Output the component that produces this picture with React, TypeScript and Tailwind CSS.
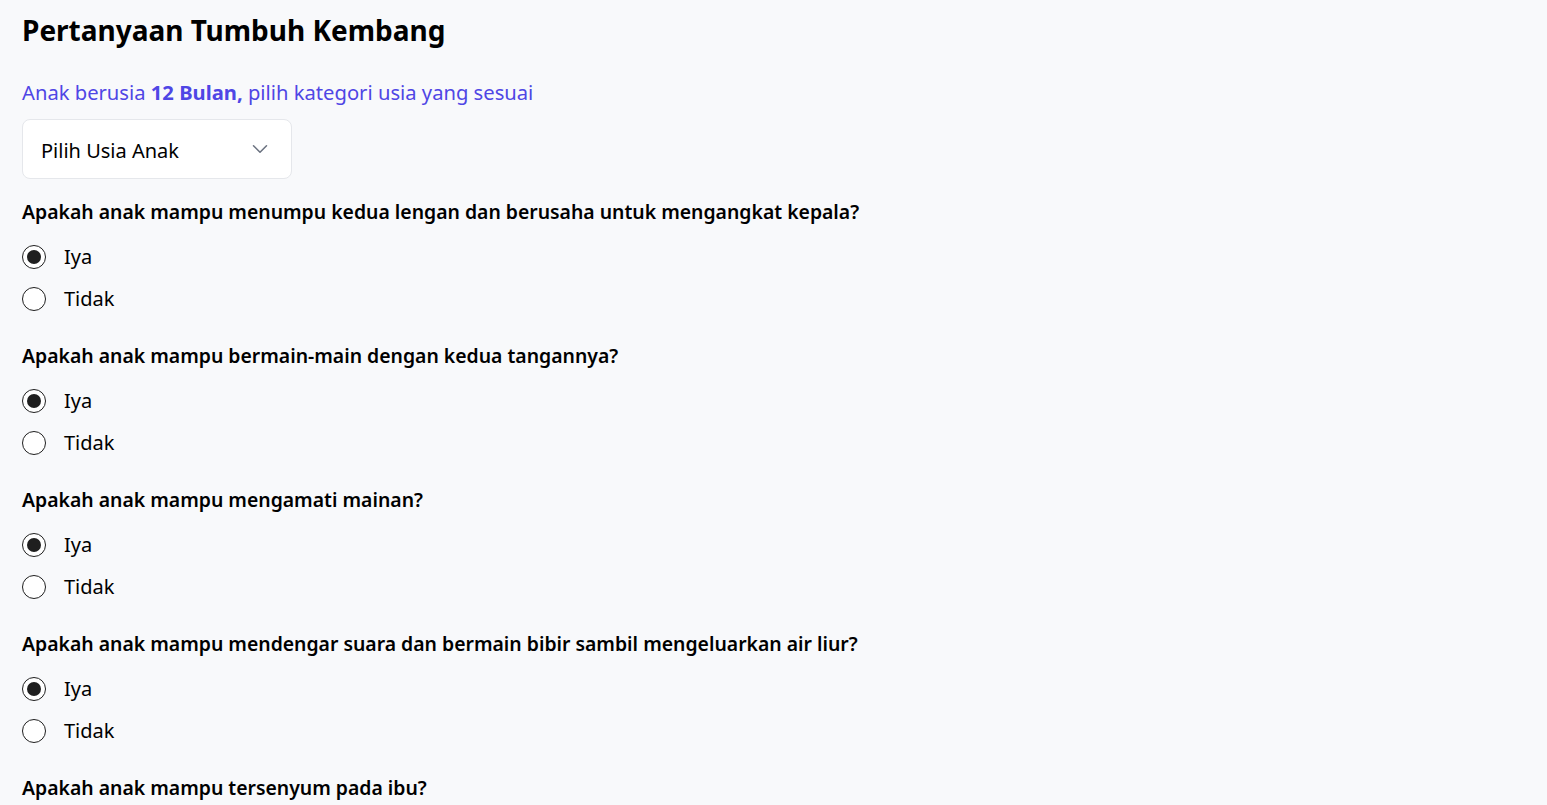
import React, { useState } from "react";

const questions = [
  "Apakah anak mampu menumpu kedua lengan dan berusaha untuk mengangkat kepala?",
  "Apakah anak mampu bermain-main dengan kedua tangannya?",
  "Apakah anak mampu mengamati mainan?",
  "Apakah anak mampu mendengar suara dan bermain bibir sambil mengeluarkan air liur?",
  "Apakah anak mampu tersenyum pada ibu?",
];

function Radio({ checked, label, onClick }: { checked: boolean; label: string; onClick: () => void }) {
  return (
    <button type="button" onClick={onClick} className="flex items-center gap-[18px] h-[42px] text-left">
      <span className="w-6 h-6 rounded-full border-[1.5px] border-[#1f1f1f] bg-white flex items-center justify-center">
        {checked && <span className="w-[14px] h-[14px] rounded-full bg-[#1f1f1f]" />}
      </span>
      <span className="text-[20px] text-black">{label}</span>
    </button>
  );
}

export default function App() {
  const [answers, setAnswers] = useState<string[]>(questions.map(() => "Iya"));
  return (
    <div
      className="min-h-screen bg-[#f8f9fb] px-[22px] pt-[10px] pb-10 text-black"
      style={{ fontFamily: '"Noto Sans", "Open Sans", sans-serif' }}
    >
      <h1 className="text-[28px] font-bold leading-[40px]">Pertanyaan Tumbuh Kembang</h1>
      <p className="mt-[28px] text-[20.2px] text-[#4f46e5] leading-[28px]">
        Anak berusia <span className="font-bold">12 Bulan,</span> pilih kategori usia yang sesuai
      </p>
      <div className="mt-[13px] w-[270px] h-[60px] rounded-lg border border-gray-200 bg-white flex items-center justify-between pl-[18px] pr-[18px]">
        <span className="text-[20px] pt-[3px]">Pilih Usia Anak</span>
        <svg width="26" height="26" viewBox="0 0 24 24" fill="none" stroke="#6b7280" strokeWidth="1.4" strokeLinecap="round" strokeLinejoin="round">
          <path d="M6 9l6 6 6-6" />
        </svg>
      </div>
      <div className="mt-[18px] flex flex-col gap-[21px]">
        {questions.map((q, i) => (
          <div key={i} className="flex flex-col">
            <p className="text-[19.4px] font-semibold leading-[30px]">{q}</p>
            <div className="mt-[9px] flex flex-col">
              {["Iya", "Tidak"].map((opt) => (
                <Radio
                  key={opt}
                  label={opt}
                  checked={answers[i] === opt}
                  onClick={() => setAnswers((a) => a.map((v, j) => (j === i ? opt : v)))}
                />
              ))}
            </div>
          </div>
        ))}
      </div>
    </div>
  );
}
